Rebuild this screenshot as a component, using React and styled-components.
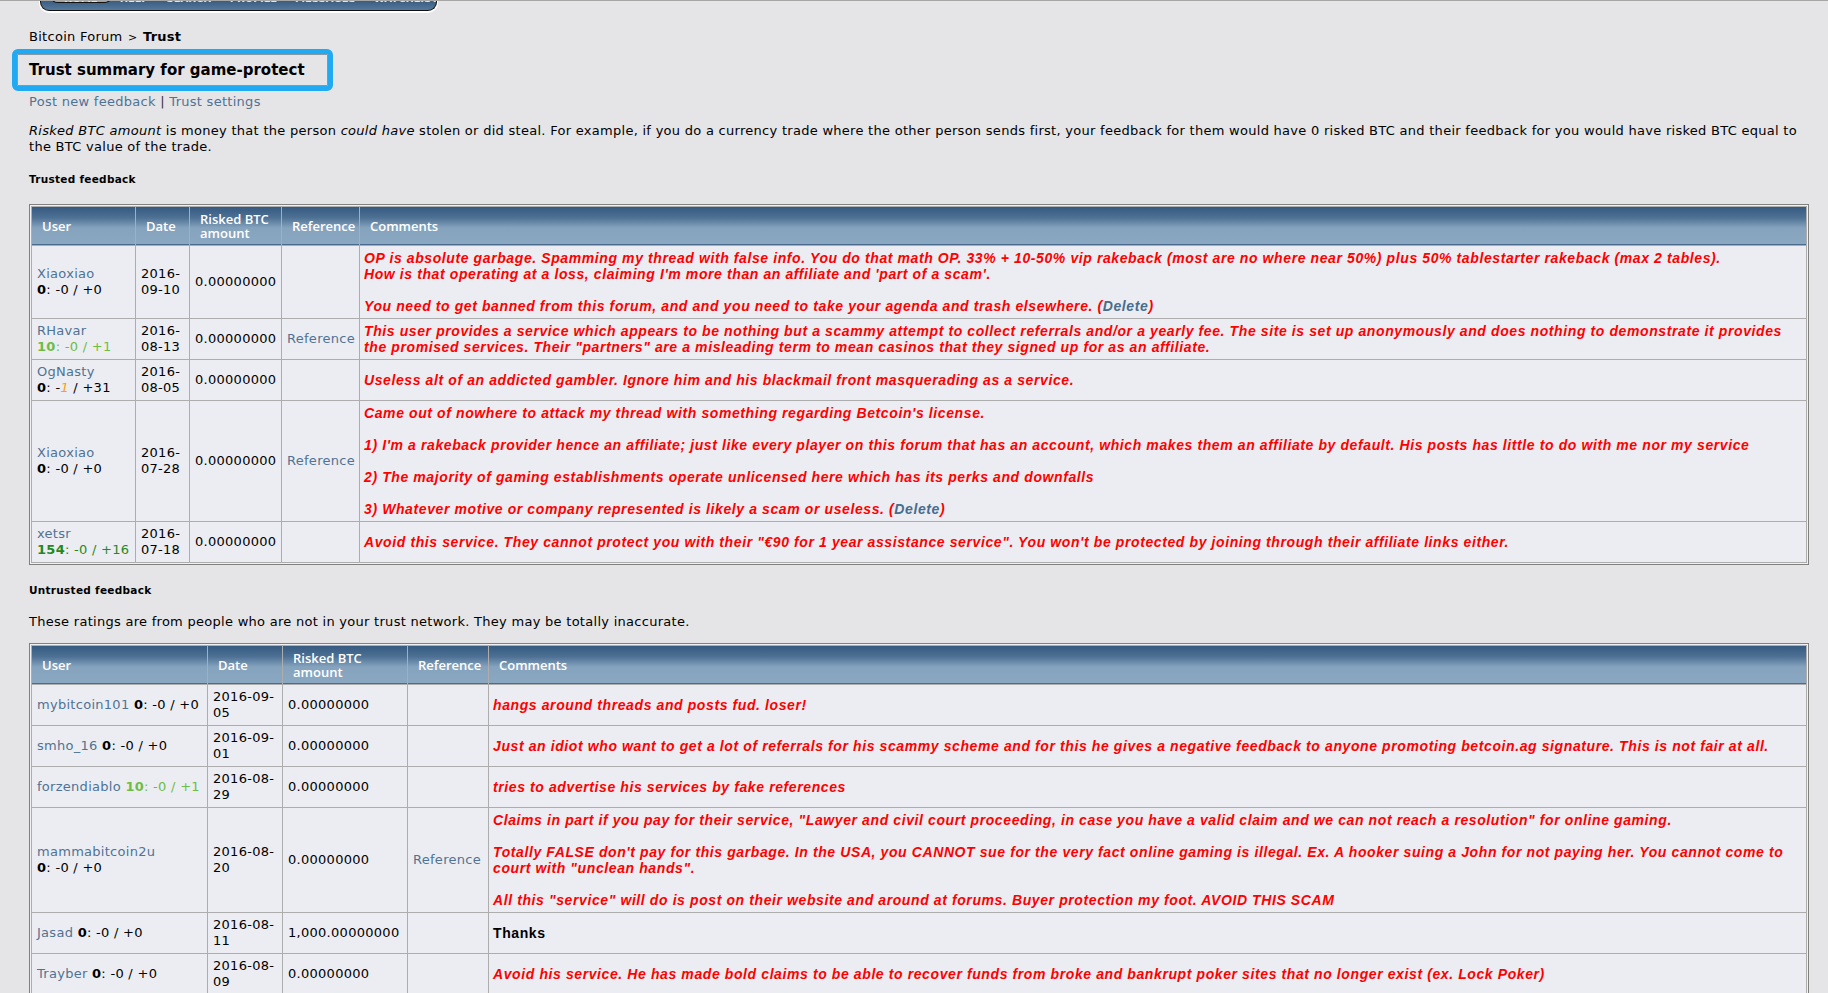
import React from 'react';
import styled, { createGlobalStyle } from 'styled-components';

const GlobalStyle = createGlobalStyle`
  * { box-sizing: border-box; }
  html, body { margin: 0; padding: 0; background: #e5e5e8; }
  body {
    font-family: "DejaVu Sans", Verdana, sans-serif;
    font-size: 13px;
    letter-spacing: 0.28px;
    color: #000;
  }
`;

const Page = styled.div`
  border-top: 1px solid #a6a6a6;
  padding: 0 19px 30px 29px;
`;

const MenuStrip = styled.div`
  margin-left: 11px;
  width: 397px;
  height: 10px;
  display: flex;
  padding-left: 10px;
  background: linear-gradient(#3b5d81, #56789b);
  border: 1px solid #111;
  border-top: none;
  border-radius: 0 0 9px 9px;
  box-shadow: 0 1px 0 1px #fff;
  overflow: hidden;
`;

const MenuTab = styled.span`
  display: block;
  height: ${({ $active }) => ($active ? '10px' : 'auto')};
  margin-top: -8px;
  padding: 0 ${({ $active }) => ($active ? '12px' : '9px')};
  font-family: "DejaVu Sans", Verdana, sans-serif;
  font-size: 10px;
  font-weight: bold;
  letter-spacing: 0;
  line-height: 12px;
  color: #dfe6ee;
  text-transform: uppercase;
  background: ${({ $active }) => ($active ? '#8ba8c3' : 'transparent')};
  border: ${({ $active }) => ($active ? '1px solid #111' : 'none')};
  border-top: none;
  border-radius: 0 0 6px 6px;
`;

const Crumbs = styled.div`
  margin-top: 18px;
  line-height: 16px;
  b { font-weight: bold; }
  .sep { font-size: 11px; padding: 0 1px; }
`;

const TitleBox = styled.div`
  margin: 3px 0 0 -17px;
  width: 321px;
  height: 42px;
  display: flex;
  align-items: center;
  padding-left: 12px;
  border: 5px solid #21aaf1;
  border-radius: 6px;
  box-shadow: inset 0 0 0 1px #8a96a2;
  font-size: 15px;
  font-weight: bold;
  letter-spacing: 0;
`;

const LinkRow = styled.div`
  margin-top: 3px;
  line-height: 16px;
  color: #333;
`;

const Link = styled.a`
  color: #4f7395;
  text-decoration: none;
  cursor: pointer;
`;

const Intro = styled.p`
  margin: 13px 0 0;
  line-height: 16px;
`;

const SectionTitle = styled.div`
  margin-top: ${({ $gap }) => $gap}px;
  font-size: 10.5px;
  font-weight: bold;
  line-height: 14px;
`;

const Note = styled.div`
  margin-top: 17px;
  line-height: 16px;
`;

const TableFrame = styled.div`
  margin-top: ${({ $gap }) => $gap}px;
  border: 1px solid #808080;
  padding: 1px;
  background: #f2f2f4;
`;

const Table = styled.table`
  width: 100%;
  table-layout: fixed;
  border-collapse: separate;
  border-spacing: 1px;
  background: #adadad;
`;

const Th = styled.th`
  width: ${({ $w }) => ($w ? `${$w}px` : 'auto')};
  height: 38px;
  padding: 0 4px 0 10px;
  text-align: left;
  vertical-align: middle;
  font-family: "Open Sans", "DejaVu Sans", sans-serif;
  font-size: 13px;
  font-weight: 600;
  letter-spacing: 0;
  line-height: 14px;
  color: #fff;
  background: linear-gradient(#365a80 0%, #4d7094 28%, #86a3be 55%, #8ba8c2 100%);
  box-shadow: inset 0 -1px 0 #4a6b8d;
`;

const Td = styled.td`
  padding: 4px 5px;
  line-height: 16px;
  vertical-align: middle;
  background: #ecedf2;
  white-space: ${({ $nowrap }) => ($nowrap ? 'nowrap' : 'normal')};
`;

const CommentCell = styled.td`
  padding: 4px 5px 4px 4px;
  line-height: 16px;
  vertical-align: middle;
  background: #ecedf2;
  font-family: "Liberation Sans", Arial, sans-serif;
  font-size: 14px;
  letter-spacing: 0.6px;
  font-weight: bold;
  font-style: ${({ $plain }) => ($plain ? 'normal' : 'italic')};
  color: ${({ $plain }) => ($plain ? '#000' : '#ff0000')};
`;

const ScoreText = styled.span`
  color: ${({ $tone }) =>
    $tone === 'light' ? '#6cbd45' : $tone === 'dark' ? '#1f8a1f' : '#000'};
  white-space: nowrap;
  b { font-weight: bold; }
`;

const NegMark = styled.span`
  color: #f5a11c;
  font-style: italic;
`;

const DeleteLink = styled(Link)`
  color: #476c8e;
`;

function Score({ total, neg, pos, tone, orange }) {
  return (
    <ScoreText $tone={tone}>
      <b>{total}</b>: -{orange ? <NegMark>{neg}</NegMark> : neg} / +{pos}
    </ScoreText>
  );
}

const del = (
  <>
    (<DeleteLink>Delete</DeleteLink>)
  </>
);

const trusted = [
  {
    user: 'Xiaoxiao', score: { total: '0', neg: '0', pos: '0' }, date: '2016-09-10', ref: false,
    comment: (
      <>
        OP is absolute garbage. Spamming my thread with false info. You do that math OP. 33% + 10-50% vip rakeback (most are no where near 50%) plus 50% tablestarter rakeback (max 2 tables).<br />
        How is that operating at a loss, claiming I'm more than an affiliate and 'part of a scam'.<br /><br />
        You need to get banned from this forum, and and you need to take your agenda and trash elsewhere. {del}
      </>
    ),
  },
  {
    user: 'RHavar', score: { total: '10', neg: '0', pos: '1', tone: 'light' }, date: '2016-08-13', ref: true,
    comment: (
      <>
        This user provides a service which appears to be nothing but a scammy attempt to collect referrals and/or a yearly fee. The site is set up anonymously and does nothing to demonstrate it provides<br />
        the promised services. Their "partners" are a misleading term to mean casinos that they signed up for as an affiliate.
      </>
    ),
  },
  {
    user: 'OgNasty', score: { total: '0', neg: '1', pos: '31', orange: true }, date: '2016-08-05', ref: false,
    comment: <>Useless alt of an addicted gambler. Ignore him and his blackmail front masquerading as a service.</>,
  },
  {
    user: 'Xiaoxiao', score: { total: '0', neg: '0', pos: '0' }, date: '2016-07-28', ref: true,
    comment: (
      <>
        Came out of nowhere to attack my thread with something regarding Betcoin's license.<br /><br />
        1) I'm a rakeback provider hence an affiliate; just like every player on this forum that has an account, which makes them an affiliate by default. His posts has little to do with me nor my service<br /><br />
        2) The majority of gaming establishments operate unlicensed here which has its perks and downfalls<br /><br />
        3) Whatever motive or company represented is likely a scam or useless. {del}
      </>
    ),
  },
  {
    user: 'xetsr', score: { total: '154', neg: '0', pos: '16', tone: 'dark' }, date: '2016-07-18', ref: false,
    comment: <>Avoid this service. They cannot protect you with their "€90 for 1 year assistance service". You won't be protected by joining through their affiliate links either.</>,
  },
];

const untrusted = [
  {
    user: 'mybitcoin101', score: { total: '0', neg: '0', pos: '0' }, date: '2016-09-05', amount: '0.00000000', ref: false,
    comment: <>hangs around threads and posts fud. loser!</>,
  },
  {
    user: 'smho_16', score: { total: '0', neg: '0', pos: '0' }, date: '2016-09-01', amount: '0.00000000', ref: false,
    comment: <>Just an idiot who want to get a lot of referrals for his scammy scheme and for this he gives a negative feedback to anyone promoting betcoin.ag signature. This is not fair at all.</>,
  },
  {
    user: 'forzendiablo', score: { total: '10', neg: '0', pos: '1', tone: 'light' }, date: '2016-08-29', amount: '0.00000000', ref: false,
    comment: <>tries to advertise his services by fake references</>,
  },
  {
    user: 'mammabitcoin2u', wrap: true, score: { total: '0', neg: '0', pos: '0' }, date: '2016-08-20', amount: '0.00000000', ref: true,
    comment: (
      <>
        Claims in part if you pay for their service, "Lawyer and civil court proceeding, in case you have a valid claim and we can not reach a resolution" for online gaming.<br /><br />
        Totally FALSE don't pay for this garbage. In the USA, you CANNOT sue for the very fact online gaming is illegal. Ex. A hooker suing a John for not paying her. You cannot come to<br />
        court with "unclean hands".<br /><br />
        All this "service" will do is post on their website and around at forums. Buyer protection my foot. AVOID THIS SCAM
      </>
    ),
  },
  {
    user: 'Jasad', score: { total: '0', neg: '0', pos: '0' }, date: '2016-08-11', amount: '1,000.00000000', ref: false, plain: true,
    comment: <>Thanks</>,
  },
  {
    user: 'Trayber', score: { total: '0', neg: '0', pos: '0' }, date: '2016-08-09', amount: '0.00000000', ref: false,
    comment: <>Avoid his service. He has made bold claims to be able to recover funds from broke and bankrupt poker sites that no longer exist (ex. Lock Poker)</>,
  },
];

function FeedbackTable({ rows, widths, stacked, gap }) {
  return (
    <TableFrame $gap={gap}>
      <Table>
        <thead>
          <tr>
            <Th $w={widths[0]}>User</Th>
            <Th $w={widths[1]}>Date</Th>
            <Th $w={widths[2]}>Risked BTC amount</Th>
            <Th $w={widths[3]}>Reference</Th>
            <Th>Comments</Th>
          </tr>
        </thead>
        <tbody>
          {rows.map((r, i) => (
            <tr key={i}>
              <Td $nowrap>
                <Link>{r.user}</Link>
                {stacked || r.wrap ? <br /> : ' '}
                <Score {...r.score} />
              </Td>
              <Td>{r.date}</Td>
              <Td $nowrap>{r.amount || '0.00000000'}</Td>
              <Td $nowrap>{r.ref ? <Link>Reference</Link> : null}</Td>
              <CommentCell $plain={r.plain}>{r.comment}</CommentCell>
            </tr>
          ))}
        </tbody>
      </Table>
    </TableFrame>
  );
}

export default function App() {
  const menu = ['Home', 'Help', 'Search', 'Profile', 'Messages', 'Watchlist', 'Members', 'Logout'];
  return (
    <>
      <GlobalStyle />
      <Page>
        <MenuStrip>
          {menu.map((m, i) => (
            <MenuTab key={m} $active={i === 0}>{m}</MenuTab>
          ))}
        </MenuStrip>

        <Crumbs>
          Bitcoin Forum <span className="sep">&gt;</span> <b>Trust</b>
        </Crumbs>

        <TitleBox>Trust summary for game-protect</TitleBox>

        <LinkRow>
          <Link>Post new feedback</Link> | <Link>Trust settings</Link>
        </LinkRow>

        <Intro>
          <i>Risked BTC amount</i> is money that the person <i>could have</i> stolen or did steal. For example, if you do a currency trade where the other person sends first, your feedback for them would have 0 risked BTC and their feedback for you would have risked BTC equal to the BTC value of the trade.
        </Intro>

        <SectionTitle $gap={17}>Trusted feedback</SectionTitle>
        <FeedbackTable rows={trusted} widths={[103, 53, 91, 77]} stacked gap={18} />

        <SectionTitle $gap={18}>Untrusted feedback</SectionTitle>
        <Note>These ratings are from people who are not in your trust network. They may be totally inaccurate.</Note>
        <FeedbackTable rows={untrusted} widths={[175, 74, 124, 80]} gap={13} />
      </Page>
    </>
  );
}
